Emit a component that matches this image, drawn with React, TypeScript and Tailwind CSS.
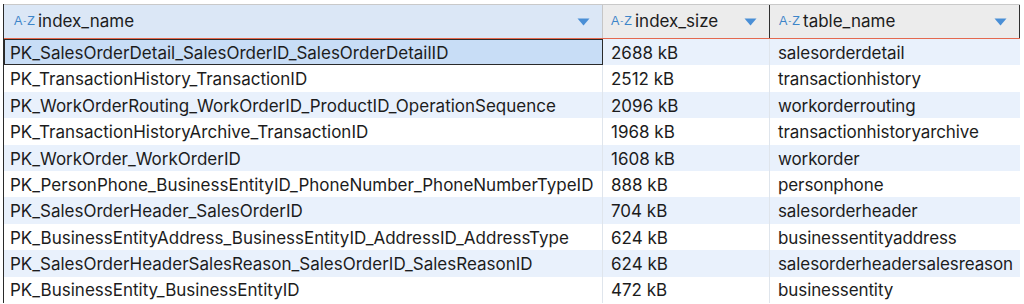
import React from 'react';

type Row = { name: string; size: string; table: string };

const rows: Row[] = [
  { name: 'PK_SalesOrderDetail_SalesOrderID_SalesOrderDetailID', size: '2688 kB', table: 'salesorderdetail' },
  { name: 'PK_TransactionHistory_TransactionID', size: '2512 kB', table: 'transactionhistory' },
  { name: 'PK_WorkOrderRouting_WorkOrderID_ProductID_OperationSequence', size: '2096 kB', table: 'workorderrouting' },
  { name: 'PK_TransactionHistoryArchive_TransactionID', size: '1968 kB', table: 'transactionhistoryarchive' },
  { name: 'PK_WorkOrder_WorkOrderID', size: '1608 kB', table: 'workorder' },
  { name: 'PK_PersonPhone_BusinessEntityID_PhoneNumber_PhoneNumberTypeID', size: '888 kB', table: 'personphone' },
  { name: 'PK_SalesOrderHeader_SalesOrderID', size: '704 kB', table: 'salesorderheader' },
  { name: 'PK_BusinessEntityAddress_BusinessEntityID_AddressID_AddressType', size: '624 kB', table: 'businessentityaddress' },
  { name: 'PK_SalesOrderHeaderSalesReason_SalesOrderID_SalesReasonID', size: '624 kB', table: 'salesorderheadersalesreason' },
  { name: 'PK_BusinessEntity_BusinessEntityID', size: '472 kB', table: 'businessentity' },
];

function AZ() {
  return (
    <span className="flex items-center text-[12.5px] leading-none text-[#3d85c9] font-['Liberation_Sans',sans-serif]">
      A<span className="text-[9px] mx-[1px]">-</span>Z
    </span>
  );
}

function Caret() {
  return (
    <svg width="13" height="8" viewBox="0 0 13 8">
      <path d="M0.5 0.5 H12.5 L6.5 7.5 Z" fill="#4a8fd6" />
    </svg>
  );
}

function HeaderCell({ label, width, bg, border, iconPad }: { label: string; width: string; bg: string; border: string; iconPad: string }) {
  return (
    <div className={`${width} ${bg} ${border} ${iconPad} h-full flex items-center pr-[12px]`}>
      <AZ />
      <span className="ml-[3px] flex-1 text-[17px] text-[#1c1c1c]">{label}</span>
      <Caret />
    </div>
  );
}

export default function App() {
  return (
    <div className="w-[1024px] h-[304px] bg-white overflow-hidden pt-[4px] font-['Inter',sans-serif]">
      <div className="ml-[3px] w-[1017px] border-l border-[#2a2a2a]">
        {/* Header */}
        <div className="h-[35px] flex border-t border-[#c9c9c9] border-b border-b-[#e4694f]">
          <HeaderCell label="index_name" width="w-[599px]" bg="bg-[#dbe7f6]" border="border-r border-[#c6c6c6]" iconPad="pl-[10px]" />
          <HeaderCell label="index_size" width="w-[167px]" bg="bg-[#ececec]" border="border-r-[1.5px] border-[#2f2f2f]" iconPad="pl-[8px]" />
          <HeaderCell label="table_name" width="w-[250px]" bg="bg-[#ececec]" border="border-r-[1.5px] border-[#2f2f2f]" iconPad="pl-[9px]" />
        </div>
        {/* Rows */}
        {rows.map((r, i) => (
          <div
            key={r.name}
            className={`h-[26.4px] flex text-[17px] text-[#1c1c1c] ${i % 2 === 0 ? 'bg-[#e9f1fc]' : 'bg-white'}`}
          >
            <div
              className={`w-[599px] flex items-center pl-[6px] pt-[3px] border-r border-[#dfe5ec] ${
                i === 0 ? 'bg-[#c8ddf6] outline outline-[1.5px] outline-[#2a2a2a] -outline-offset-1' : ''
              }`}
            >
              {r.name}
            </div>
            <div className="w-[167px] flex items-center pl-[8px] pt-[3px] border-r border-[#dfe5ec]">{r.size}</div>
            <div className="w-[250px] flex items-center pl-[8px] pt-[3px] tracking-[-0.1px]">{r.table}</div>
          </div>
        ))}
      </div>
    </div>
  );
}
